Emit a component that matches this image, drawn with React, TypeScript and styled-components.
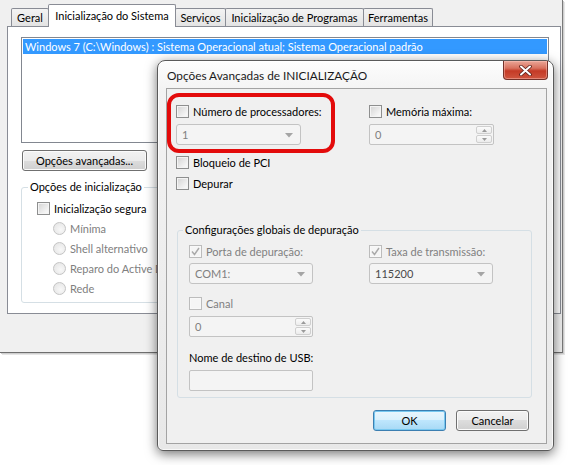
import React from "react";
import styled, { createGlobalStyle } from "styled-components";

const GlobalStyle = createGlobalStyle`
  html, body { margin: 0; padding: 0; background: #fff; }
  body {
    font-family: Lato, "Noto Sans", sans-serif;
    font-size: 11px;
    color: #000;
  }
  * { box-sizing: border-box; }
`;

const Screen = styled.div`
  position: relative;
  width: 570px;
  height: 465px;
  overflow: hidden;
  background: #fff;
`;

/* ---------- host window (Configuração do Sistema) ---------- */

const HostWindow = styled.div`
  width: 563px;
  height: 353px;
  padding-top: 4px;
  background: #f0f0f0;
  border-right: 1px solid #7a7a7a;
  border-bottom: 1px solid #6e6e6e;
  box-shadow: 1px 1px 0 #cfcfcf, 2px 2px 0 #e6e6e6;
`;

const TabStrip = styled.div`
  display: flex;
  align-items: flex-end;
  height: 22px;
  padding-left: 12px;
`;

const Tab = styled.div<{ $w: number; $active?: boolean }>`
  position: relative;
  z-index: ${(p) => (p.$active ? 2 : 1)};
  width: ${(p) => p.$w}px;
  height: ${(p) => (p.$active ? 23 : 18)}px;
  margin-left: -1px;
  margin-bottom: ${(p) => (p.$active ? -1 : 0)}px;
  display: flex;
  align-items: center;
  justify-content: center;
  padding-bottom: ${(p) => (p.$active ? 1 : 0)}px;
  border: 1px solid #898c95;
  border-bottom: none;
  border-radius: 2px 2px 0 0;
  background: ${(p) =>
    p.$active ? "#fff" : "linear-gradient(#f3f3f3, #ebebeb 50%, #e3e3e3)"};
  white-space: nowrap;
`;

const TabPanel = styled.div`
  width: 554px;
  height: 288px;
  margin-left: 7px;
  padding: 10px 12px 0 13px;
  border: 1px solid #898c95;
  background: #fff;
`;

const ListBox = styled.div`
  width: 528px;
  height: 106px;
  padding: 1px;
  border: 1px solid #828790;
  background: #fff;
`;

const SelectedRow = styled.div`
  height: 15px;
  padding-left: 2px;
  line-height: 15px;
  background: #3399ff;
  color: #fff;
  white-space: nowrap;
  overflow: hidden;
`;

const PushButton = styled.div<{ $w: number; $default?: boolean }>`
  width: ${(p) => p.$w}px;
  height: 21px;
  display: flex;
  align-items: center;
  justify-content: center;
  border: 1px solid ${(p) => (p.$default ? "#3c7fb1" : "#707070")};
  border-radius: 3px;
  background: ${(p) =>
    p.$default
      ? "linear-gradient(#eaf6fd, #d9f0fc 50%, #bee6fd 50%, #a7d9f5)"
      : "linear-gradient(#f2f2f2, #ebebeb 50%, #dddddd 50%, #cfcfcf)"};
  box-shadow: inset 0 0 0 1px ${(p) => (p.$default ? "#78c8f0" : "#fbfbfb")};
  white-space: nowrap;
`;

const AdvancedButton = styled(PushButton)`
  margin: 7px 0 0 1px;
`;

/* the right part of this group lies under the dialog */
const StartupGroup = styled.fieldset`
  width: 140px;
  height: 124px;
  margin: 8px 0 0;
  padding: 0;
  border: 1px solid #d5dfe5;
  border-radius: 3px;
`;

const GroupLegend = styled.legend`
  margin-left: 6px;
  padding: 0 2px;
  line-height: 16px;
  white-space: nowrap;
`;

const StartupBody = styled.div`
  display: flex;
  flex-direction: column;
  gap: 5px;
  padding: 6px 0 0 15px;
  overflow: hidden;
`;

/* ---------- common controls ---------- */

const Row = styled.div<{ $mt?: number; $indent?: number; $muted?: boolean }>`
  display: flex;
  align-items: center;
  gap: 4px;
  height: 15px;
  margin-top: ${(p) => p.$mt ?? 0}px;
  margin-left: ${(p) => p.$indent ?? 0}px;
  color: ${(p) => (p.$muted ? "#808080" : "#000")};
  white-space: nowrap;
`;

const CheckBox = styled.span<{ $disabled?: boolean }>`
  flex: none;
  width: 13px;
  height: 13px;
  display: flex;
  align-items: center;
  justify-content: center;
  border: 1px solid ${(p) => (p.$disabled ? "#bcbcbc" : "#8e8f8f")};
  background: ${(p) =>
    p.$disabled
      ? "#f5f5f5"
      : "linear-gradient(135deg, #d3d3d3, #f6f6f6 80%)"};
  box-shadow: inset 0 0 0 1px
    ${(p) => (p.$disabled ? "#f8f8f8" : "#f4f4f4")};
`;

const Radio = styled.span`
  flex: none;
  width: 13px;
  height: 13px;
  border-radius: 50%;
  border: 1px solid #c4c4c4;
  background: radial-gradient(circle at 60% 60%, #f8f8f8, #e2e2e2);
`;

const Field = styled.div<{ $w: number; $mt?: number; $tone?: string; $rounded?: boolean }>`
  position: relative;
  width: ${(p) => p.$w}px;
  height: 21px;
  margin-top: ${(p) => p.$mt ?? 0}px;
  display: flex;
  align-items: center;
  padding-left: 5px;
  border: 1px solid #c3c3c3;
  border-radius: ${(p) => (p.$rounded ? 3 : 2)}px;
  background: #f4f4f4;
  color: ${(p) => p.$tone ?? "#808080"};
`;

const Arrow = styled.svg`
  position: absolute;
  right: 7px;
  top: 8px;
`;

const SpinStack = styled.div`
  position: absolute;
  right: 1px;
  top: 1px;
  bottom: 1px;
  width: 16px;
  display: flex;
  flex-direction: column;
  gap: 1px;
`;

const SpinHalf = styled.div`
  flex: 1;
  display: flex;
  align-items: center;
  justify-content: center;
  border: 1px solid #cfcfcf;
  border-radius: 2px;
  background: linear-gradient(#fbfbfb, #ececec);
`;

/* ---------- dialog ---------- */

const Dialog = styled.div`
  position: absolute;
  left: 157px;
  top: 60px;
  width: 397px;
  height: 391px;
  display: flex;
  flex-direction: column;
  padding: 0 6px 6px 8px;
  border: 1px solid #5a5a5a;
  border-radius: 8px 8px 6px 6px;
  background: linear-gradient(#fdfdfd, #f3f3f3 30px, #e8e8e8);
  box-shadow: inset 0 0 0 1px rgba(255, 255, 255, 0.7),
    0 3px 12px rgba(0, 0, 0, 0.55);
`;

const TitleBar = styled.div`
  flex: none;
  height: 27px;
  display: flex;
  justify-content: space-between;
  align-items: flex-start;
`;

const Title = styled.div`
  padding: 7px 0 0 1px;
  font-size: 11.8px;
  color: #1a1a1a;
  white-space: nowrap;
`;

const CloseButton = styled.div`
  width: 45px;
  height: 19px;
  margin-right: -1px;
  display: flex;
  align-items: center;
  justify-content: center;
  border: 1px solid #74322a;
  border-top: none;
  border-radius: 0 0 4px 4px;
  background: linear-gradient(#eaa697, #d8715e 40%, #c43a26 55%, #cf553f);
  box-shadow: inset 0 0 0 1px rgba(255, 200, 190, 0.45);
`;

const Client = styled.div`
  position: relative;
  flex: 1;
  padding: 15px 14px 0 9px;
  border: 1px solid #a3a3a3;
  background: #f0f0f0;
`;

const Highlight = styled.div`
  position: absolute;
  left: 0;
  top: 4px;
  width: 168px;
  height: 60px;
  border: 4px solid #e30b0b;
  border-radius: 12px;
  pointer-events: none;
`;

const Columns = styled.div<{ $left: number }>`
  display: grid;
  grid-template-columns: ${(p) => p.$left}px 1fr;
`;

const Column = styled.div`
  display: flex;
  flex-direction: column;
  align-items: flex-start;
`;

const DebugGroup = styled.fieldset`
  width: 355px;
  height: 176px;
  margin: 31px 0 0 1px;
  padding: 0;
  border: 1px solid #d5dfe5;
  border-radius: 3px;
`;

const DebugLegend = styled(GroupLegend)`
  margin-left: 5px;
`;

const DebugBody = styled.div`
  padding: 6px 0 0 11px;
`;

const Footer = styled.div`
  display: flex;
  justify-content: flex-end;
  gap: 10px;
  margin-top: 12px;
  padding-right: 3px;
`;

/* ---------- small parts ---------- */

const Check = ({ label, disabled, checked, mt }: {
  label: string; disabled?: boolean; checked?: boolean; mt?: number;
}) => (
  <Row $mt={mt} $muted={disabled}>
    <CheckBox $disabled={disabled}>
      {checked && (
        <svg width="9" height="9" viewBox="0 0 9 9">
          <path d="M1 4.5 L3.5 7.5 L8 1" fill="none" stroke="#a9a9a9" strokeWidth="1.4" />
        </svg>
      )}
    </CheckBox>
    {label}
  </Row>
);

const Combo = ({ value, w, mt, tone }: { value: string; w: number; mt?: number; tone?: string }) => (
  <Field $w={w} $mt={mt} $tone={tone} $rounded>
    {value}
    <Arrow width="8" height="5" viewBox="0 0 8 5">
      <path d="M0 0 H8 L4 4.5 Z" fill="#a5a5a5" />
    </Arrow>
  </Field>
);

const Spin = ({ value, w, mt }: { value: string; w: number; mt?: number }) => (
  <Field $w={w} $mt={mt}>
    {value}
    <SpinStack>
      <SpinHalf>
        <svg width="5" height="3" viewBox="0 0 5 3"><path d="M0 3 L2.5 0 L5 3 Z" fill="#9a9a9a" /></svg>
      </SpinHalf>
      <SpinHalf>
        <svg width="5" height="3" viewBox="0 0 5 3"><path d="M0 0 L2.5 3 L5 0 Z" fill="#9a9a9a" /></svg>
      </SpinHalf>
    </SpinStack>
  </Field>
);

const tabs = [
  { label: "Geral", w: 38 },
  { label: "Inicialização do Sistema", w: 128, active: true },
  { label: "Serviços", w: 51 },
  { label: "Inicialização de Programas", w: 139 },
  { label: "Ferramentas", w: 70 },
];

const bootModes = ["Mínima", "Shell alternativo", "Reparo do Active Directory", "Rede"];

export default function App() {
  return (
    <Screen>
      <GlobalStyle />

      <HostWindow>
        <TabStrip>
          {tabs.map((t) => (
            <Tab key={t.label} $w={t.w} $active={t.active}>
              {t.label}
            </Tab>
          ))}
        </TabStrip>

        <TabPanel>
          <ListBox>
            <SelectedRow>
              Windows 7 (C:\Windows) : Sistema Operacional atual; Sistema Operacional padrão
            </SelectedRow>
          </ListBox>

          <AdvancedButton $w={125}>Opções avançadas...</AdvancedButton>

          <StartupGroup>
            <GroupLegend>Opções de inicialização</GroupLegend>
            <StartupBody>
              <Check label="Inicialização segura" />
              {bootModes.map((m) => (
                <Row key={m} $indent={16} $muted>
                  <Radio />
                  {m}
                </Row>
              ))}
            </StartupBody>
          </StartupGroup>
        </TabPanel>
      </HostWindow>

      <Dialog>
        <TitleBar>
          <Title>Opções Avançadas de INICIALIZAÇÃO</Title>
          <CloseButton>
            <svg width="13" height="11" viewBox="0 0 13 11">
              <path d="M2 1.5 L11 9.5 M11 1.5 L2 9.5" stroke="#5a1f18" strokeWidth="3.6" strokeLinecap="round" />
              <path d="M2 1.5 L11 9.5 M11 1.5 L2 9.5" stroke="#ffffff" strokeWidth="2" strokeLinecap="round" />
            </svg>
          </CloseButton>
        </TitleBar>

        <Client>
          <Columns $left={193}>
            <Column>
              <Check label="Número de processadores:" />
              <Combo value="1" w={125} mt={5} />
              <Check label="Bloqueio de PCI" mt={10} />
              <Check label="Depurar" mt={6} />
            </Column>
            <Column>
              <Check label="Memória máxima:" />
              <Spin value="0" w={125} mt={5} />
            </Column>
          </Columns>

          <DebugGroup>
            <DebugLegend>Configurações globais de depuração</DebugLegend>
            <DebugBody>
              <Columns $left={180}>
                <Column>
                  <Check label="Porta de depuração:" disabled checked />
                  <Combo value="COM1:" w={124} mt={4} />
                  <Check label="Canal" disabled mt={12} />
                  <Spin value="0" w={124} mt={5} />
                  <Row $mt={13}>Nome de destino de USB:</Row>
                  <Field $w={124} $mt={5} />
                </Column>
                <Column>
                  <Check label="Taxa de transmissão:" disabled checked />
                  <Combo value="115200" w={124} mt={4} tone="#4a4a4a" />
                </Column>
              </Columns>
            </DebugBody>
          </DebugGroup>

          <Footer>
            <PushButton $w={73} $default>OK</PushButton>
            <PushButton $w={73}>Cancelar</PushButton>
          </Footer>

          <Highlight />
        </Client>
      </Dialog>
    </Screen>
  );
}
